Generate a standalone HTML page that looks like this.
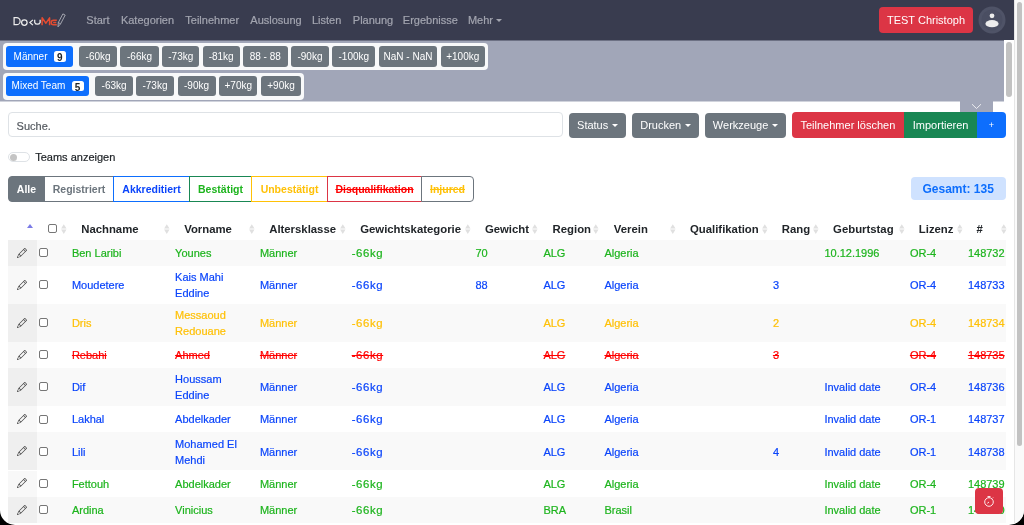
<!DOCTYPE html><html><head><meta charset="utf-8"><style>
html,body{margin:0;padding:0;}
html{background:#000;}
body{width:1024px;height:525px;overflow:hidden;position:relative;font-family:"Liberation Sans",sans-serif;background:#000;}
#page{will-change:transform;position:absolute;left:0;top:0;width:1024px;height:525px;background:#fff;border-radius:0 0 15px 15px;overflow:hidden;}
.a{position:absolute;}
.t{position:absolute;white-space:nowrap;line-height:16px;-webkit-text-stroke:0.2px currentColor;}
.btn{position:absolute;display:flex;align-items:center;justify-content:center;color:#fff;white-space:nowrap;box-sizing:border-box;}
.cat{font-size:10px;border-radius:3px;background:#6c757d;height:20.5px;}
.caret{display:inline-block;width:0;height:0;border-left:3px solid transparent;border-right:3px solid transparent;border-top:3.5px solid #fff;margin-left:3.5px;vertical-align:middle;}
.cb{position:absolute;width:9px;height:9px;box-sizing:border-box;border:1px solid #767676;border-radius:2px;background:#fff;}
.sa{position:absolute;width:6px;height:10px;}
.sa:before{content:"";position:absolute;left:0;top:0;border-left:3px solid transparent;border-right:3px solid transparent;border-bottom:4px solid #dcdcdc;}
.sa:after{content:"";position:absolute;left:0;top:5.5px;border-left:3px solid transparent;border-right:3px solid transparent;border-top:4px solid #dcdcdc;}
.th{position:absolute;font-weight:bold;font-size:11.35px;color:#212529;line-height:16px;white-space:nowrap;}
.td{position:absolute;font-size:11px;line-height:16px;-webkit-text-stroke:0.2px currentColor;}
</style></head><body><div id="page">

<div class="a" style="left:0;top:0;width:1014px;height:40px;background:#393c4f;"></div>
<svg class="a" style="left:0;top:0" width="70" height="35" viewBox="0 0 70 35">
<g fill="none" stroke="#ececec" stroke-width="1.25">
<path d="M14.1 17.6 V24.7 H16.6 A3.55 3.55 0 0 0 16.6 17.6 Z"/>
<circle cx="24.35" cy="22.5" r="2.75"/>
<path d="M32.9 19.9 L29.9 22.5 L32.9 25.1"/>
<path d="M34.7 19.7 V22.4 A2.9 2.9 0 0 0 40.1 22.4 V19.7"/>
</g>
<g fill="none" stroke="#e54b30" stroke-width="1.5" stroke-linejoin="round">
<path d="M42.1 25.3 V17.8 L45.9 23.2 L49.6 17.8 V25.3"/>
<path d="M56.8 20.2 H53.5 A2.3 2.3 0 0 0 53.5 24.8 H56.8 M53.2 22.5 H56.3"/>
</g>
<g fill="none" stroke="#c4c5cc" stroke-width="0.75">
<path d="M58 26.8 L58.3 22.6 L62.9 13.9 L65.2 15.1 L60.6 23.8 Z M58.3 22.6 L60.6 23.8"/>
</g>
</svg>
<div class="t" style="left:86.3px;top:12px;font-size:11px;color:#a3a5b0;">Start</div>
<div class="t" style="left:120.89999999999999px;top:12px;font-size:11px;color:#a3a5b0;">Kategorien</div>
<div class="t" style="left:185.3px;top:12px;font-size:11px;color:#a3a5b0;">Teilnehmer</div>
<div class="t" style="left:250.3px;top:12px;font-size:11px;color:#a3a5b0;">Auslosung</div>
<div class="t" style="left:312.0px;top:12px;font-size:11px;color:#a3a5b0;">Listen</div>
<div class="t" style="left:352.8px;top:12px;font-size:11px;color:#a3a5b0;">Planung</div>
<div class="t" style="left:402.8px;top:12px;font-size:11px;color:#a3a5b0;">Ergebnisse</div>
<div class="t" style="left:467.90000000000003px;top:12px;font-size:11px;color:#a3a5b0;">Mehr</div>
<div class="a" style="left:496px;top:18.5px;border-left:3px solid transparent;border-right:3px solid transparent;border-top:3.5px solid #a3a5b0;"></div>
<div class="btn" style="left:879px;top:7px;width:94px;height:26px;background:#dc3545;border-radius:4px;font-size:11px;">TEST Christoph</div>
<svg class="a" style="left:978px;top:6px" width="28" height="28" viewBox="0 0 28 28">
<circle cx="14" cy="14" r="13.5" fill="#4f5367"/>
<circle cx="14" cy="14" r="10.5" fill="#4a4e62"/>
<circle cx="14" cy="9.8" r="2.4" fill="#ececec"/>
<ellipse cx="14" cy="17.7" rx="6.6" ry="3.6" fill="#ececec"/>
</svg>
<div class="a" style="left:1014px;top:0;width:10px;height:525px;background:#fafafa;border-left:1px solid #e6e6e6;box-sizing:border-box;"></div>
<div class="a" style="left:1016.5px;top:2px;width:5px;height:444px;background:#c2c2c2;border-radius:3px;"></div>
<div class="a" style="left:0;top:40px;width:1004px;height:61px;background:#a1a6b8;"></div>
<div class="a" style="left:0;top:40px;width:1014px;height:1px;background:#6d7184;"></div>
<div class="a" style="left:0;top:101px;width:960.4px;height:1px;background:#d0d3dc;"></div>
<div class="a" style="left:993.4px;top:101px;width:10.6px;height:1px;background:#d0d3dc;"></div>
<div class="a" style="left:1004px;top:40px;width:10px;height:61px;background:#fff;"></div>
<div class="a" style="left:1006.2px;top:42.3px;width:5.8px;height:54.5px;background:#c2c2c2;border-radius:3px;"></div>
<div class="a" style="left:3px;top:43px;width:485px;height:27px;background:#f8f9fa;border-radius:4px;"></div>
<div class="btn cat" style="left:5.6px;top:46px;width:67.2px;background:#0d6efd;justify-content:flex-start;padding-left:8px;">Männer</div>
<div class="a" style="left:53.8px;top:51.2px;width:12.2px;height:10.6px;background:#fff;border-radius:2.5px;color:#212529;font-size:10px;font-weight:bold;text-align:center;line-height:14.2px;">9</div>
<div class="btn cat" style="left:79px;top:46px;width:38.2px;">-60kg</div>
<div class="btn cat" style="left:120.4px;top:46px;width:38.29999999999998px;">-66kg</div>
<div class="btn cat" style="left:162.1px;top:46px;width:37.400000000000006px;">-73kg</div>
<div class="btn cat" style="left:202.6px;top:46px;width:37.099999999999994px;">-81kg</div>
<div class="btn cat" style="left:242.7px;top:46px;width:45.19999999999999px;">88 - 88</div>
<div class="btn cat" style="left:290.9px;top:46px;width:38.10000000000002px;">-90kg</div>
<div class="btn cat" style="left:332.3px;top:46px;width:43.0px;">-100kg</div>
<div class="btn cat" style="left:378.6px;top:46px;width:58.89999999999998px;">NaN - NaN</div>
<div class="btn cat" style="left:440.8px;top:46px;width:43.89999999999998px;">+100kg</div>
<div class="a" style="left:3px;top:72.5px;width:301px;height:27px;background:#f8f9fa;border-radius:4px;"></div>
<div class="btn cat" style="left:5.6px;top:75.5px;width:83.5px;background:#0d6efd;justify-content:flex-start;padding-left:6px;">Mixed Team</div>
<div class="a" style="left:71.5px;top:80.7px;width:12.2px;height:10.6px;background:#fff;border-radius:2.5px;color:#212529;font-size:10px;font-weight:bold;text-align:center;line-height:14.2px;">5</div>
<div class="btn cat" style="left:95.2px;top:75.5px;width:37.8px;">-63kg</div>
<div class="btn cat" style="left:136.2px;top:75.5px;width:37.60000000000002px;">-73kg</div>
<div class="btn cat" style="left:177.5px;top:75.5px;width:38.099999999999994px;">-90kg</div>
<div class="btn cat" style="left:219.2px;top:75.5px;width:38.19999999999999px;">+70kg</div>
<div class="btn cat" style="left:261px;top:75.5px;width:40.10000000000002px;">+90kg</div>
<div class="a" style="left:960.4px;top:100px;width:33px;height:12px;background:#a1a6b8;"></div>
<svg class="a" style="left:971px;top:102.5px" width="11" height="7" viewBox="0 0 11 7"><path d="M1 1.2 L5.5 5.5 L10 1.2" stroke="#f4f4f6" stroke-width="0.9" fill="none"/></svg>
<div class="a" style="left:8.2px;top:112.3px;width:554.5px;height:25.2px;box-sizing:border-box;border:1px solid #dee2e6;border-radius:4px;background:#fff;"></div>
<div class="t" style="left:16.6px;top:117.5px;font-size:11px;color:#555a60;">Suche.</div>
<div class="btn" style="left:568.6px;top:112.5px;width:57.60000000000002px;height:25px;background:#6c757d;border-radius:4px;font-size:11px;">Status<span class="caret"></span></div>
<div class="btn" style="left:632px;top:112.5px;width:67px;height:25px;background:#6c757d;border-radius:4px;font-size:11px;">Drucken<span class="caret"></span></div>
<div class="btn" style="left:704.8px;top:112.5px;width:81.0px;height:25px;background:#6c757d;border-radius:4px;font-size:11px;">Werkzeuge<span class="caret"></span></div>
<div class="btn" style="left:791.9px;top:112.3px;width:112px;height:25.3px;background:#dc3545;border-radius:4px 0 0 4px;font-size:11px;">Teilnehmer löschen</div>
<div class="btn" style="left:903.9px;top:112.3px;width:73.4px;height:25.3px;background:#198754;font-size:11px;">Importieren</div>
<div class="btn" style="left:977.3px;top:112.3px;width:28.3px;height:25.3px;background:#0d6efd;border-radius:0 4px 4px 0;font-size:9px;padding-top:1px;">+</div>
<div class="a" style="left:8.2px;top:151.8px;width:21.5px;height:10.7px;box-sizing:border-box;border:1px solid #dee2e6;border-radius:6px;background:#fff;"></div>
<div class="a" style="left:10px;top:153.7px;width:7px;height:7px;border-radius:50%;background:#c4c4c4;"></div>
<div class="t" style="left:35.2px;top:149px;font-size:11px;color:#212529;">Teams anzeigen</div>
<div class="btn" style="left:8px;top:176px;width:37px;height:25.6px;background:#6c757d;color:#fff;border:1px solid #6c757d;border-radius:4px 0 0 4px;font-size:10.5px;font-weight:bold;">Alle</div>
<div class="btn" style="left:44px;top:176px;width:70px;height:25.6px;background:#fff;color:#6c757d;border:1px solid #6c757d;border-radius:0;font-size:10.5px;font-weight:bold;">Registriert</div>
<div class="btn" style="left:113px;top:176px;width:77px;height:25.6px;background:#fff;color:#0b45fb;border:1px solid #0d6efd;border-radius:0;font-size:10.5px;font-weight:bold;">Akkreditiert</div>
<div class="btn" style="left:189px;top:176px;width:63px;height:25.6px;background:#fff;color:#1db41d;border:1px solid #198754;border-radius:0;font-size:10.5px;font-weight:bold;">Bestätigt</div>
<div class="btn" style="left:251px;top:176px;width:77px;height:25.6px;background:#fff;color:#ffc107;border:1px solid #ffc107;border-radius:0;font-size:10.5px;font-weight:bold;">Unbestätigt</div>
<div class="btn" style="left:327px;top:176px;width:95px;height:25.6px;background:#fff;color:#ff0000;border:1px solid #dc3545;border-radius:0;font-size:10.5px;font-weight:bold;text-decoration:line-through;">Disqualifikation</div>
<div class="btn" style="left:421px;top:176px;width:53px;height:25.6px;background:#fff;color:#ffc107;border:1px solid #6c757d;border-radius:0 4px 4px 0;font-size:10.5px;font-weight:bold;text-decoration:line-through;">Injured</div>
<div class="btn" style="left:910.7px;top:177.4px;width:95px;height:23px;background:#cfe2ff;color:#0d6efd;border-radius:4px;font-size:12px;font-weight:bold;">Gesamt: 135</div>
<div class="a" style="left:27px;top:224px;border-left:3px solid transparent;border-right:3px solid transparent;border-bottom:4.6px solid #7b7be6;"></div>
<div class="cb" style="left:48px;top:224px;"></div>
<svg class="a" style="left:60.70px;top:223.8px" width="6" height="10.5" viewBox="0 0 6 10.5"><path d="M0.1 4.6 L2.8 0.2 L5.5 4.6 Z M0.1 5.5 L5.5 5.5 L2.8 10 Z" fill="#e0e0e0"/></svg>
<svg class="a" style="left:163.70px;top:223.8px" width="6" height="10.5" viewBox="0 0 6 10.5"><path d="M0.1 4.6 L2.8 0.2 L5.5 4.6 Z M0.1 5.5 L5.5 5.5 L2.8 10 Z" fill="#e0e0e0"/></svg>
<svg class="a" style="left:248.70px;top:223.8px" width="6" height="10.5" viewBox="0 0 6 10.5"><path d="M0.1 4.6 L2.8 0.2 L5.5 4.6 Z M0.1 5.5 L5.5 5.5 L2.8 10 Z" fill="#e0e0e0"/></svg>
<svg class="a" style="left:340.20px;top:223.8px" width="6" height="10.5" viewBox="0 0 6 10.5"><path d="M0.1 4.6 L2.8 0.2 L5.5 4.6 Z M0.1 5.5 L5.5 5.5 L2.8 10 Z" fill="#e0e0e0"/></svg>
<svg class="a" style="left:464.70px;top:223.8px" width="6" height="10.5" viewBox="0 0 6 10.5"><path d="M0.1 4.6 L2.8 0.2 L5.5 4.6 Z M0.1 5.5 L5.5 5.5 L2.8 10 Z" fill="#e0e0e0"/></svg>
<svg class="a" style="left:532.40px;top:223.8px" width="6" height="10.5" viewBox="0 0 6 10.5"><path d="M0.1 4.6 L2.8 0.2 L5.5 4.6 Z M0.1 5.5 L5.5 5.5 L2.8 10 Z" fill="#e0e0e0"/></svg>
<svg class="a" style="left:593.10px;top:223.8px" width="6" height="10.5" viewBox="0 0 6 10.5"><path d="M0.1 4.6 L2.8 0.2 L5.5 4.6 Z M0.1 5.5 L5.5 5.5 L2.8 10 Z" fill="#e0e0e0"/></svg>
<svg class="a" style="left:669.70px;top:223.8px" width="6" height="10.5" viewBox="0 0 6 10.5"><path d="M0.1 4.6 L2.8 0.2 L5.5 4.6 Z M0.1 5.5 L5.5 5.5 L2.8 10 Z" fill="#e0e0e0"/></svg>
<svg class="a" style="left:762.10px;top:223.8px" width="6" height="10.5" viewBox="0 0 6 10.5"><path d="M0.1 4.6 L2.8 0.2 L5.5 4.6 Z M0.1 5.5 L5.5 5.5 L2.8 10 Z" fill="#e0e0e0"/></svg>
<svg class="a" style="left:813.10px;top:223.8px" width="6" height="10.5" viewBox="0 0 6 10.5"><path d="M0.1 4.6 L2.8 0.2 L5.5 4.6 Z M0.1 5.5 L5.5 5.5 L2.8 10 Z" fill="#e0e0e0"/></svg>
<svg class="a" style="left:898.50px;top:223.8px" width="6" height="10.5" viewBox="0 0 6 10.5"><path d="M0.1 4.6 L2.8 0.2 L5.5 4.6 Z M0.1 5.5 L5.5 5.5 L2.8 10 Z" fill="#e0e0e0"/></svg>
<svg class="a" style="left:956.70px;top:223.8px" width="6" height="10.5" viewBox="0 0 6 10.5"><path d="M0.1 4.6 L2.8 0.2 L5.5 4.6 Z M0.1 5.5 L5.5 5.5 L2.8 10 Z" fill="#e0e0e0"/></svg>
<svg class="a" style="left:1001.10px;top:223.8px" width="6" height="10.5" viewBox="0 0 6 10.5"><path d="M0.1 4.6 L2.8 0.2 L5.5 4.6 Z M0.1 5.5 L5.5 5.5 L2.8 10 Z" fill="#e0e0e0"/></svg>
<div class="th" style="left:81.2px;top:221px;">Nachname</div>
<div class="th" style="left:184.20000000000002px;top:221px;">Vorname</div>
<div class="th" style="left:269.2px;top:221px;">Altersklasse</div>
<div class="th" style="left:360.2px;top:221px;">Gewichtskategorie</div>
<div class="th" style="left:484.9px;top:221px;">Gewicht</div>
<div class="th" style="left:552.6px;top:221px;">Region</div>
<div class="th" style="left:613.8px;top:221px;">Verein</div>
<div class="th" style="left:690.0px;top:221px;">Qualifikation</div>
<div class="th" style="left:781.8px;top:221px;">Rang</div>
<div class="th" style="left:833.1px;top:221px;">Geburtstag</div>
<div class="th" style="left:918.8px;top:221px;">Lizenz</div>
<div class="th" style="left:976.4px;top:221px;">#</div>
<div class="a" style="left:8px;top:240px;width:997.6px;height:25.899999999999977px;background:#f9f9f9;"></div>
<div class="a" style="left:8px;top:240px;width:28.6px;height:25.899999999999977px;background:#efefef;"></div>
<svg class="a" style="left:16.9px;top:247.85px" width="10" height="10" viewBox="0 0 16 16"><path fill="#444" d="M12.146.146a.5.5 0 0 1 .708 0l3 3a.5.5 0 0 1 0 .708l-10 10a.5.5 0 0 1-.168.11l-5 2a.5.5 0 0 1-.65-.65l2-5a.5.5 0 0 1 .11-.168zM11.207 2.5 13.5 4.793 14.793 3.5 12.5 1.207zm1.586 3L10.5 3.207 4 9.707V10h.5a.5.5 0 0 1 .5.5v.5h.5a.5.5 0 0 1 .5.5v.5h.293zm-9.761 5.175-.106.106-1.528 3.821 3.821-1.528.106-.106A.5.5 0 0 1 5 12.5V12h-.5a.5.5 0 0 1-.5-.5V11h-.5a.5.5 0 0 1-.468-.325"/></svg>
<div class="cb" style="left:39px;top:248.45px;"></div>
<div class="td" style="left:71.9px;top:245.35px;color:#1db41d;">Ben Laribi</div>
<div class="td" style="left:175.1px;top:245.35px;color:#1db41d;">Younes</div>
<div class="td" style="left:259.9px;top:245.35px;color:#1db41d;">Männer</div>
<div class="td" style="left:350.9px;top:245.35px;color:#1db41d;letter-spacing:0.6px;font-size:11.4px;margin-left:0.8px;">-66kg</div>
<div class="td" style="left:475.4px;top:245.35px;color:#1db41d;">70</div>
<div class="td" style="left:543.4px;top:245.35px;color:#1db41d;">ALG</div>
<div class="td" style="left:604.4px;top:245.35px;color:#1db41d;">Algeria</div>
<div class="td" style="left:824.4px;top:245.35px;color:#1db41d;">10.12.1996</div>
<div class="td" style="left:909.9px;top:245.35px;color:#1db41d;">OR-4</div>
<div class="td" style="left:967.9px;top:245.35px;color:#1db41d;">148732</div>
<div class="a" style="left:8px;top:265.9px;width:997.6px;height:38.10000000000002px;background:#fff;"></div>
<div class="a" style="left:8px;top:265.9px;width:28.6px;height:38.10000000000002px;background:#f8f8f8;"></div>
<svg class="a" style="left:16.9px;top:279.85px" width="10" height="10" viewBox="0 0 16 16"><path fill="#444" d="M12.146.146a.5.5 0 0 1 .708 0l3 3a.5.5 0 0 1 0 .708l-10 10a.5.5 0 0 1-.168.11l-5 2a.5.5 0 0 1-.65-.65l2-5a.5.5 0 0 1 .11-.168zM11.207 2.5 13.5 4.793 14.793 3.5 12.5 1.207zm1.586 3L10.5 3.207 4 9.707V10h.5a.5.5 0 0 1 .5.5v.5h.5a.5.5 0 0 1 .5.5v.5h.293zm-9.761 5.175-.106.106-1.528 3.821 3.821-1.528.106-.106A.5.5 0 0 1 5 12.5V12h-.5a.5.5 0 0 1-.5-.5V11h-.5a.5.5 0 0 1-.468-.325"/></svg>
<div class="cb" style="left:39px;top:280.45px;"></div>
<div class="td" style="left:71.9px;top:277.35px;color:#0b45fb;">Moudetere</div>
<div class="td" style="left:175.1px;top:269.35px;color:#0b45fb;">Kais Mahi<br>Eddine</div>
<div class="td" style="left:259.9px;top:277.35px;color:#0b45fb;">Männer</div>
<div class="td" style="left:350.9px;top:277.35px;color:#0b45fb;letter-spacing:0.6px;font-size:11.4px;margin-left:0.8px;">-66kg</div>
<div class="td" style="left:475.4px;top:277.35px;color:#0b45fb;">88</div>
<div class="td" style="left:543.4px;top:277.35px;color:#0b45fb;">ALG</div>
<div class="td" style="left:604.4px;top:277.35px;color:#0b45fb;">Algeria</div>
<div class="td" style="left:772.9px;top:277.35px;color:#0b45fb;">3</div>
<div class="td" style="left:909.9px;top:277.35px;color:#0b45fb;">OR-4</div>
<div class="td" style="left:967.9px;top:277.35px;color:#0b45fb;">148733</div>
<div class="a" style="left:8px;top:304px;width:997.6px;height:37.69999999999999px;background:#f9f9f9;"></div>
<div class="a" style="left:8px;top:304px;width:28.6px;height:37.69999999999999px;background:#efefef;"></div>
<svg class="a" style="left:16.9px;top:317.75px" width="10" height="10" viewBox="0 0 16 16"><path fill="#444" d="M12.146.146a.5.5 0 0 1 .708 0l3 3a.5.5 0 0 1 0 .708l-10 10a.5.5 0 0 1-.168.11l-5 2a.5.5 0 0 1-.65-.65l2-5a.5.5 0 0 1 .11-.168zM11.207 2.5 13.5 4.793 14.793 3.5 12.5 1.207zm1.586 3L10.5 3.207 4 9.707V10h.5a.5.5 0 0 1 .5.5v.5h.5a.5.5 0 0 1 .5.5v.5h.293zm-9.761 5.175-.106.106-1.528 3.821 3.821-1.528.106-.106A.5.5 0 0 1 5 12.5V12h-.5a.5.5 0 0 1-.5-.5V11h-.5a.5.5 0 0 1-.468-.325"/></svg>
<div class="cb" style="left:39px;top:318.35px;"></div>
<div class="td" style="left:71.9px;top:315.25px;color:#ffc107;">Dris</div>
<div class="td" style="left:175.1px;top:307.25px;color:#ffc107;">Messaoud<br>Redouane</div>
<div class="td" style="left:259.9px;top:315.25px;color:#ffc107;">Männer</div>
<div class="td" style="left:350.9px;top:315.25px;color:#ffc107;letter-spacing:0.6px;font-size:11.4px;margin-left:0.8px;">-66kg</div>
<div class="td" style="left:543.4px;top:315.25px;color:#ffc107;">ALG</div>
<div class="td" style="left:604.4px;top:315.25px;color:#ffc107;">Algeria</div>
<div class="td" style="left:772.9px;top:315.25px;color:#ffc107;">2</div>
<div class="td" style="left:909.9px;top:315.25px;color:#ffc107;">OR-4</div>
<div class="td" style="left:967.9px;top:315.25px;color:#ffc107;">148734</div>
<div class="a" style="left:8px;top:341.7px;width:997.6px;height:25.900000000000034px;background:#fff;"></div>
<div class="a" style="left:8px;top:341.7px;width:28.6px;height:25.900000000000034px;background:#f8f8f8;"></div>
<svg class="a" style="left:16.9px;top:349.55px" width="10" height="10" viewBox="0 0 16 16"><path fill="#444" d="M12.146.146a.5.5 0 0 1 .708 0l3 3a.5.5 0 0 1 0 .708l-10 10a.5.5 0 0 1-.168.11l-5 2a.5.5 0 0 1-.65-.65l2-5a.5.5 0 0 1 .11-.168zM11.207 2.5 13.5 4.793 14.793 3.5 12.5 1.207zm1.586 3L10.5 3.207 4 9.707V10h.5a.5.5 0 0 1 .5.5v.5h.5a.5.5 0 0 1 .5.5v.5h.293zm-9.761 5.175-.106.106-1.528 3.821 3.821-1.528.106-.106A.5.5 0 0 1 5 12.5V12h-.5a.5.5 0 0 1-.5-.5V11h-.5a.5.5 0 0 1-.468-.325"/></svg>
<div class="cb" style="left:39px;top:350.15px;"></div>
<div class="td" style="left:71.9px;top:347.05px;color:#ff0000;text-decoration:line-through;">Rebahi</div>
<div class="td" style="left:175.1px;top:347.05px;color:#ff0000;text-decoration:line-through;">Ahmed</div>
<div class="td" style="left:259.9px;top:347.05px;color:#ff0000;text-decoration:line-through;">Männer</div>
<div class="td" style="left:350.9px;top:347.05px;color:#ff0000;text-decoration:line-through;letter-spacing:0.6px;font-size:11.4px;margin-left:0.8px;">-66kg</div>
<div class="td" style="left:543.4px;top:347.05px;color:#ff0000;text-decoration:line-through;">ALG</div>
<div class="td" style="left:604.4px;top:347.05px;color:#ff0000;text-decoration:line-through;">Algeria</div>
<div class="td" style="left:772.9px;top:347.05px;color:#ff0000;text-decoration:line-through;">3</div>
<div class="td" style="left:909.9px;top:347.05px;color:#ff0000;text-decoration:line-through;">OR-4</div>
<div class="td" style="left:967.9px;top:347.05px;color:#ff0000;text-decoration:line-through;">148735</div>
<div class="a" style="left:8px;top:367.6px;width:997.6px;height:38.099999999999966px;background:#f9f9f9;"></div>
<div class="a" style="left:8px;top:367.6px;width:28.6px;height:38.099999999999966px;background:#efefef;"></div>
<svg class="a" style="left:16.9px;top:381.55px" width="10" height="10" viewBox="0 0 16 16"><path fill="#444" d="M12.146.146a.5.5 0 0 1 .708 0l3 3a.5.5 0 0 1 0 .708l-10 10a.5.5 0 0 1-.168.11l-5 2a.5.5 0 0 1-.65-.65l2-5a.5.5 0 0 1 .11-.168zM11.207 2.5 13.5 4.793 14.793 3.5 12.5 1.207zm1.586 3L10.5 3.207 4 9.707V10h.5a.5.5 0 0 1 .5.5v.5h.5a.5.5 0 0 1 .5.5v.5h.293zm-9.761 5.175-.106.106-1.528 3.821 3.821-1.528.106-.106A.5.5 0 0 1 5 12.5V12h-.5a.5.5 0 0 1-.5-.5V11h-.5a.5.5 0 0 1-.468-.325"/></svg>
<div class="cb" style="left:39px;top:382.15px;"></div>
<div class="td" style="left:71.9px;top:379.05px;color:#0b45fb;">Dif</div>
<div class="td" style="left:175.1px;top:371.05px;color:#0b45fb;">Houssam<br>Eddine</div>
<div class="td" style="left:259.9px;top:379.05px;color:#0b45fb;">Männer</div>
<div class="td" style="left:350.9px;top:379.05px;color:#0b45fb;letter-spacing:0.6px;font-size:11.4px;margin-left:0.8px;">-66kg</div>
<div class="td" style="left:543.4px;top:379.05px;color:#0b45fb;">ALG</div>
<div class="td" style="left:604.4px;top:379.05px;color:#0b45fb;">Algeria</div>
<div class="td" style="left:824.4px;top:379.05px;color:#0b45fb;">Invalid date</div>
<div class="td" style="left:909.9px;top:379.05px;color:#0b45fb;">OR-4</div>
<div class="td" style="left:967.9px;top:379.05px;color:#0b45fb;">148736</div>
<div class="a" style="left:8px;top:405.7px;width:997.6px;height:26.69999999999999px;background:#fff;"></div>
<div class="a" style="left:8px;top:405.7px;width:28.6px;height:26.69999999999999px;background:#f8f8f8;"></div>
<svg class="a" style="left:16.9px;top:413.95px" width="10" height="10" viewBox="0 0 16 16"><path fill="#444" d="M12.146.146a.5.5 0 0 1 .708 0l3 3a.5.5 0 0 1 0 .708l-10 10a.5.5 0 0 1-.168.11l-5 2a.5.5 0 0 1-.65-.65l2-5a.5.5 0 0 1 .11-.168zM11.207 2.5 13.5 4.793 14.793 3.5 12.5 1.207zm1.586 3L10.5 3.207 4 9.707V10h.5a.5.5 0 0 1 .5.5v.5h.5a.5.5 0 0 1 .5.5v.5h.293zm-9.761 5.175-.106.106-1.528 3.821 3.821-1.528.106-.106A.5.5 0 0 1 5 12.5V12h-.5a.5.5 0 0 1-.5-.5V11h-.5a.5.5 0 0 1-.468-.325"/></svg>
<div class="cb" style="left:39px;top:414.54999999999995px;"></div>
<div class="td" style="left:71.9px;top:411.45px;color:#0b45fb;">Lakhal</div>
<div class="td" style="left:175.1px;top:411.45px;color:#0b45fb;">Abdelkader</div>
<div class="td" style="left:259.9px;top:411.45px;color:#0b45fb;">Männer</div>
<div class="td" style="left:350.9px;top:411.45px;color:#0b45fb;letter-spacing:0.6px;font-size:11.4px;margin-left:0.8px;">-66kg</div>
<div class="td" style="left:543.4px;top:411.45px;color:#0b45fb;">ALG</div>
<div class="td" style="left:604.4px;top:411.45px;color:#0b45fb;">Algeria</div>
<div class="td" style="left:824.4px;top:411.45px;color:#0b45fb;">Invalid date</div>
<div class="td" style="left:909.9px;top:411.45px;color:#0b45fb;">OR-1</div>
<div class="td" style="left:967.9px;top:411.45px;color:#0b45fb;">148737</div>
<div class="a" style="left:8px;top:432.4px;width:997.6px;height:38.10000000000002px;background:#f9f9f9;"></div>
<div class="a" style="left:8px;top:432.4px;width:28.6px;height:38.10000000000002px;background:#efefef;"></div>
<svg class="a" style="left:16.9px;top:446.35px" width="10" height="10" viewBox="0 0 16 16"><path fill="#444" d="M12.146.146a.5.5 0 0 1 .708 0l3 3a.5.5 0 0 1 0 .708l-10 10a.5.5 0 0 1-.168.11l-5 2a.5.5 0 0 1-.65-.65l2-5a.5.5 0 0 1 .11-.168zM11.207 2.5 13.5 4.793 14.793 3.5 12.5 1.207zm1.586 3L10.5 3.207 4 9.707V10h.5a.5.5 0 0 1 .5.5v.5h.5a.5.5 0 0 1 .5.5v.5h.293zm-9.761 5.175-.106.106-1.528 3.821 3.821-1.528.106-.106A.5.5 0 0 1 5 12.5V12h-.5a.5.5 0 0 1-.5-.5V11h-.5a.5.5 0 0 1-.468-.325"/></svg>
<div class="cb" style="left:39px;top:446.95px;"></div>
<div class="td" style="left:71.9px;top:443.85px;color:#0b45fb;">Lili</div>
<div class="td" style="left:175.1px;top:435.85px;color:#0b45fb;">Mohamed El<br>Mehdi</div>
<div class="td" style="left:259.9px;top:443.85px;color:#0b45fb;">Männer</div>
<div class="td" style="left:350.9px;top:443.85px;color:#0b45fb;letter-spacing:0.6px;font-size:11.4px;margin-left:0.8px;">-66kg</div>
<div class="td" style="left:543.4px;top:443.85px;color:#0b45fb;">ALG</div>
<div class="td" style="left:604.4px;top:443.85px;color:#0b45fb;">Algeria</div>
<div class="td" style="left:772.9px;top:443.85px;color:#0b45fb;">4</div>
<div class="td" style="left:824.4px;top:443.85px;color:#0b45fb;">Invalid date</div>
<div class="td" style="left:909.9px;top:443.85px;color:#0b45fb;">OR-1</div>
<div class="td" style="left:967.9px;top:443.85px;color:#0b45fb;">148738</div>
<div class="a" style="left:8px;top:470.5px;width:997.6px;height:26.100000000000023px;background:#fff;"></div>
<div class="a" style="left:8px;top:470.5px;width:28.6px;height:26.100000000000023px;background:#f8f8f8;"></div>
<svg class="a" style="left:16.9px;top:478.45px" width="10" height="10" viewBox="0 0 16 16"><path fill="#444" d="M12.146.146a.5.5 0 0 1 .708 0l3 3a.5.5 0 0 1 0 .708l-10 10a.5.5 0 0 1-.168.11l-5 2a.5.5 0 0 1-.65-.65l2-5a.5.5 0 0 1 .11-.168zM11.207 2.5 13.5 4.793 14.793 3.5 12.5 1.207zm1.586 3L10.5 3.207 4 9.707V10h.5a.5.5 0 0 1 .5.5v.5h.5a.5.5 0 0 1 .5.5v.5h.293zm-9.761 5.175-.106.106-1.528 3.821 3.821-1.528.106-.106A.5.5 0 0 1 5 12.5V12h-.5a.5.5 0 0 1-.5-.5V11h-.5a.5.5 0 0 1-.468-.325"/></svg>
<div class="cb" style="left:39px;top:479.05px;"></div>
<div class="td" style="left:71.9px;top:475.95px;color:#1db41d;">Fettouh</div>
<div class="td" style="left:175.1px;top:475.95px;color:#1db41d;">Abdelkader</div>
<div class="td" style="left:259.9px;top:475.95px;color:#1db41d;">Männer</div>
<div class="td" style="left:350.9px;top:475.95px;color:#1db41d;letter-spacing:0.6px;font-size:11.4px;margin-left:0.8px;">-66kg</div>
<div class="td" style="left:543.4px;top:475.95px;color:#1db41d;">ALG</div>
<div class="td" style="left:604.4px;top:475.95px;color:#1db41d;">Algeria</div>
<div class="td" style="left:824.4px;top:475.95px;color:#1db41d;">Invalid date</div>
<div class="td" style="left:909.9px;top:475.95px;color:#1db41d;">OR-4</div>
<div class="td" style="left:967.9px;top:475.95px;color:#1db41d;">148739</div>
<div class="a" style="left:8px;top:496.6px;width:997.6px;height:26.0px;background:#f9f9f9;"></div>
<div class="a" style="left:8px;top:496.6px;width:28.6px;height:26.0px;background:#efefef;"></div>
<svg class="a" style="left:16.9px;top:504.5px" width="10" height="10" viewBox="0 0 16 16"><path fill="#444" d="M12.146.146a.5.5 0 0 1 .708 0l3 3a.5.5 0 0 1 0 .708l-10 10a.5.5 0 0 1-.168.11l-5 2a.5.5 0 0 1-.65-.65l2-5a.5.5 0 0 1 .11-.168zM11.207 2.5 13.5 4.793 14.793 3.5 12.5 1.207zm1.586 3L10.5 3.207 4 9.707V10h.5a.5.5 0 0 1 .5.5v.5h.5a.5.5 0 0 1 .5.5v.5h.293zm-9.761 5.175-.106.106-1.528 3.821 3.821-1.528.106-.106A.5.5 0 0 1 5 12.5V12h-.5a.5.5 0 0 1-.5-.5V11h-.5a.5.5 0 0 1-.468-.325"/></svg>
<div class="cb" style="left:39px;top:505.1px;"></div>
<div class="td" style="left:71.9px;top:502.00px;color:#1db41d;">Ardina</div>
<div class="td" style="left:175.1px;top:502.00px;color:#1db41d;">Vinicius</div>
<div class="td" style="left:259.9px;top:502.00px;color:#1db41d;">Männer</div>
<div class="td" style="left:350.9px;top:502.00px;color:#1db41d;letter-spacing:0.6px;font-size:11.4px;margin-left:0.8px;">-66kg</div>
<div class="td" style="left:543.4px;top:502.00px;color:#1db41d;">BRA</div>
<div class="td" style="left:604.4px;top:502.00px;color:#1db41d;">Brasil</div>
<div class="td" style="left:824.4px;top:502.00px;color:#1db41d;">Invalid date</div>
<div class="td" style="left:909.9px;top:502.00px;color:#1db41d;">OR-1</div>
<div class="td" style="left:967.9px;top:502.00px;color:#1db41d;">148740</div>
<div class="a" style="left:975px;top:488.2px;width:27.7px;height:25.6px;background:#dc3545;border-radius:4px;"></div>
<svg class="a" style="left:982.5px;top:494.5px" width="12" height="13" viewBox="0 0 12 13"><circle cx="6" cy="7" r="4.3" stroke="#fff" stroke-width="0.9" fill="none"/><path d="M4.5 1.6 H7.5 M6 1.6 V2.7 M6 7 L4.3 8.3 M9.3 3.3 L10.1 2.5" stroke="#fff" stroke-width="0.9" fill="none"/></svg>
</div></body></html>
